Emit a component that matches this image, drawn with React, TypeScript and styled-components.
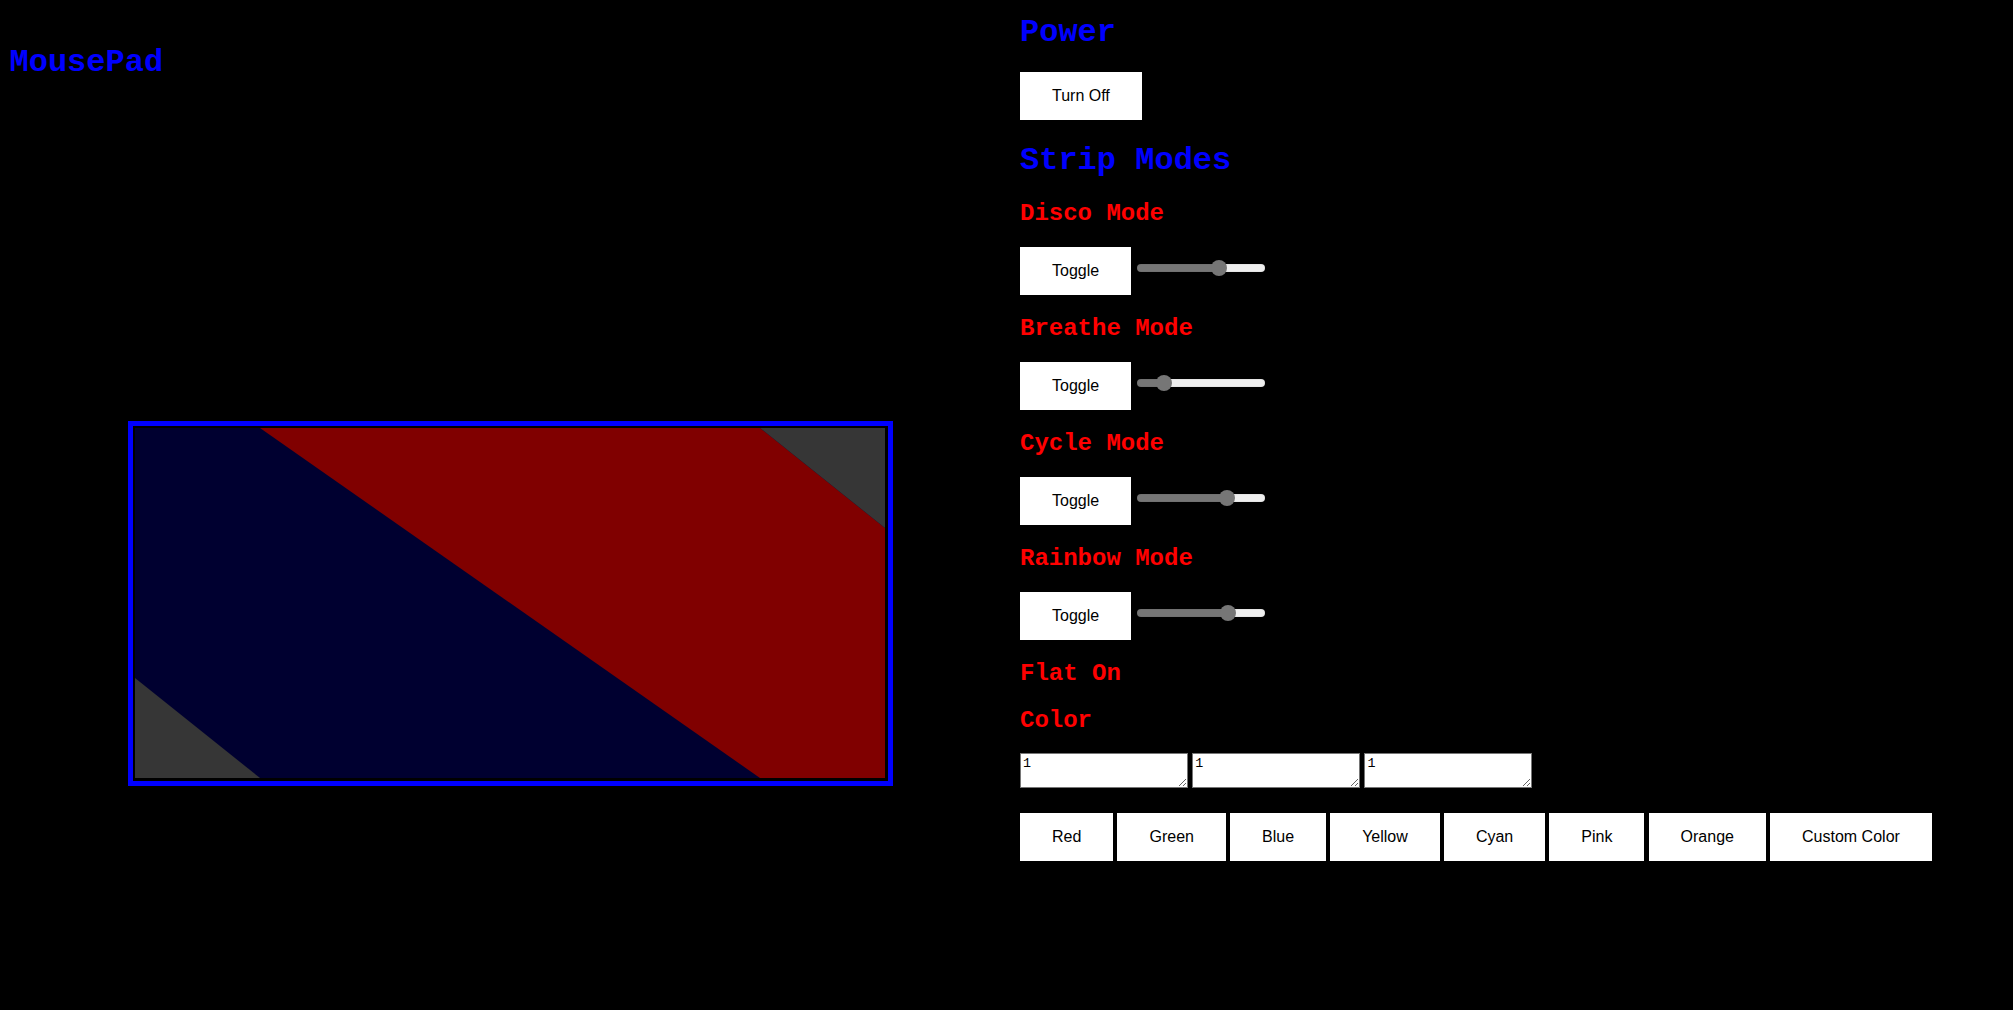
import React from "react";
import styled, { createGlobalStyle } from "styled-components";

const GlobalStyle = createGlobalStyle`
  html, body {
    margin: 0;
    padding: 0;
    background: #000000;
  }
  body {
    font-family: "Liberation Serif", serif;
  }
`;

const Page = styled.div`
  display: flex;
  align-items: flex-start;
  padding-left: 8px;
  min-height: 100vh;
  box-sizing: border-box;
  background: #000000;
`;

const LeftColumn = styled.section`
  width: 1012px;
  flex: none;
  display: flex;
  flex-direction: column;
  align-items: flex-start;
  padding-top: 45.3px;
`;

const RightColumn = styled.section`
  flex: 1;
  display: flex;
  flex-direction: column;
  align-items: flex-start;
  padding-top: 15.3px;
`;

const PadTitle = styled.h1`
  margin: 0 0 0 1.5px;
  font-family: "Liberation Mono", "Courier New", monospace;
  font-weight: 700;
  font-size: 32px;
  line-height: 36px;
  color: #0000ff;
`;

const SectionTitle = styled.h1`
  margin: 0 0 20.6px;
  font-family: "Liberation Mono", "Courier New", monospace;
  font-weight: 700;
  font-size: 32px;
  line-height: 36px;
  color: #0000ff;
`;

const ModeTitle = styled.h2`
  margin: 0 0 19.8px;
  font-family: "Liberation Mono", "Courier New", monospace;
  font-weight: 700;
  font-size: 24px;
  line-height: 27px;
  color: #ff0000;
`;

const PadFrame = styled.div`
  margin: 339.4px 0 0 120px;
  border: 5px solid #0000ff;
  padding: 2px 3px 3.7px 2px;
  background: #000000;
  line-height: 0;
`;

const PadCanvas = styled.svg`
  display: block;
  width: 750px;
  height: 350px;
`;

const Row = styled.div<{ $gap?: number; $after?: number }>`
  display: flex;
  align-items: flex-start;
  gap: ${(p) => p.$gap ?? 0}px;
  margin-bottom: ${(p) => p.$after ?? 19.8}px;
`;

const Button = styled.button`
  flex: none;
  border: none;
  margin: 0;
  background: #ffffff;
  color: #000000;
  padding: 15px 32px;
  font-family: "Liberation Sans", Arial, sans-serif;
  font-size: 16px;
  line-height: 18.4px;
  text-align: center;
  cursor: pointer;
`;

const Range = styled.input`
  -webkit-appearance: none;
  appearance: none;
  flex: none;
  width: 128px;
  height: 16px;
  margin: 13px 0 0 6.3px;
  padding: 0;
  background: transparent;

  &::-webkit-slider-runnable-track {
    height: 8px;
    border-radius: 4px;
    background: linear-gradient(
      to right,
      #767676 0,
      #767676 var(--fill),
      #efefef var(--fill),
      #efefef 100%
    );
    box-shadow: inset 0 0 0 1px rgba(0, 0, 0, 0.04);
  }

  &::-webkit-slider-thumb {
    -webkit-appearance: none;
    appearance: none;
    width: 16px;
    height: 16px;
    margin-top: -4px;
    border-radius: 50%;
    background: #767676;
    border: none;
  }
`;

const ColorInput = styled.textarea`
  box-sizing: border-box;
  flex: none;
  width: 167.5px;
  height: 35px;
  margin: 0;
  padding: 2px;
  border: 1px solid #767676;
  background: #ffffff;
  color: #000000;
  font-family: "Liberation Mono", "Courier New", monospace;
  font-size: 13.33px;
  line-height: 15px;
`;

type Mode = { name: string; value: number };

const modes: Mode[] = [
  { name: "Disco Mode", value: 66 },
  { name: "Breathe Mode", value: 17 },
  { name: "Cycle Mode", value: 73 },
  { name: "Rainbow Mode", value: 74 },
];

const colors = ["Red", "Green", "Blue", "Yellow", "Cyan", "Pink", "Orange", "Custom Color"];

function Slider({ value }: { value: number }) {
  const fill = 8 + (value / 100) * 112;
  return (
    <Range
      type="range"
      min={0}
      max={100}
      defaultValue={value}
      style={{ ["--fill" as string]: `${fill}px` } as React.CSSProperties}
    />
  );
}

export default function App() {
  return (
    <>
      <GlobalStyle />
      <Page>
        <LeftColumn>
          <PadTitle>MousePad</PadTitle>
          <PadFrame>
            <PadCanvas viewBox="0 0 750 350" xmlns="http://www.w3.org/2000/svg">
              <rect x="0" y="0" width="750" height="350" fill="#000030" />
              <polygon points="125,0 625,0 750,100 750,350 625,350" fill="#800000" />
              <polygon points="625,0 750,0 750,100" fill="#363636" />
              <polygon points="0,250 0,350 125,350" fill="#363636" />
            </PadCanvas>
          </PadFrame>
        </LeftColumn>

        <RightColumn>
          <SectionTitle>Power</SectionTitle>
          <Row $after={23}>
            <Button>Turn Off</Button>
          </Row>
          <SectionTitle>Strip Modes</SectionTitle>
          {modes.map((m) => (
            <React.Fragment key={m.name}>
              <ModeTitle>{m.name}</ModeTitle>
              <Row>
                <Button>Toggle</Button>
                <Slider value={m.value} />
              </Row>
            </React.Fragment>
          ))}
          <ModeTitle>Flat On</ModeTitle>
          <ModeTitle>Color</ModeTitle>
          <Row $gap={4.7} $after={24.4}>
            <ColorInput defaultValue="1" />
            <ColorInput defaultValue="1" />
            <ColorInput defaultValue="1" />
          </Row>
          <Row $gap={4.1} $after={0}>
            {colors.map((c) => (
              <Button key={c}>{c}</Button>
            ))}
          </Row>
        </RightColumn>
      </Page>
    </>
  );
}
